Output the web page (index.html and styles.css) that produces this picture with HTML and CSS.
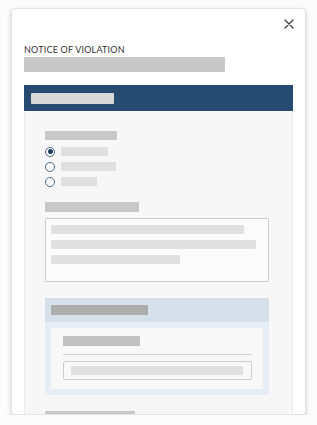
FILE: index.html
```html
<!DOCTYPE html>
<html lang="en">
<head>
  <meta charset="UTF-8">
  <meta name="viewport" content="width=device-width, initial-scale=1.0">
  <title>Notice of Violation</title>
  <link rel="stylesheet" href="styles.css">
</head>
<body>
  <div class="modal">
    <div class="modal-top">
      <button class="close-button" aria-label="Close">
        <svg width="10" height="10" viewBox="0 0 10 10">
          <path d="M1 1 L9 9 M9 1 L1 9" stroke="#444" stroke-width="1.4" stroke-linecap="round" fill="none"/>
        </svg>
      </button>
    </div>

    <div class="modal-header">
      <div class="modal-title">NOTICE OF VIOLATION</div>
      <div class="ph ph-subtitle"></div>
    </div>

    <!-- 表单区域 -->
    <div class="section-bar">
      <div class="ph ph-section"></div>
    </div>

    <div class="form-panel">
      <div class="ph ph-label" style="width: 72px"></div>
      <div class="radio-group">
        <div class="radio-row">
          <span class="radio checked"></span>
          <span class="ph ph-option" style="width: 47px"></span>
        </div>
        <div class="radio-row">
          <span class="radio"></span>
          <span class="ph ph-option" style="width: 55px"></span>
        </div>
        <div class="radio-row">
          <span class="radio"></span>
          <span class="ph ph-option" style="width: 36px"></span>
        </div>
      </div>

      <div class="ph ph-label label-gap" style="width: 94px"></div>
      <div class="textarea">
        <div class="ph ph-line" style="width: 193px"></div>
        <div class="ph ph-line" style="width: 205px"></div>
        <div class="ph ph-line" style="width: 129px"></div>
      </div>

      <div class="group">
        <div class="group-header">
          <div class="ph ph-group-title"></div>
        </div>
        <div class="group-body">
          <div class="group-card">
            <div class="ph ph-card-label"></div>
            <div class="divider"></div>
            <div class="input">
              <div class="ph ph-option" style="width: 172px"></div>
            </div>
          </div>
        </div>
      </div>

      <div class="ph ph-label bottom-label" style="width: 90px"></div>
    </div>
  </div>
</body>
</html>
```

FILE: styles.css
```css
/* 全局样式 */
* {
  box-sizing: border-box;
  margin: 0;
  padding: 0;
}

body {
  background-color: #fbfbfb;
  font-family: Lato, 'Liberation Sans', sans-serif;
  color: #333;
}

/* 弹窗 */
.modal {
  width: 295px;
  height: 407px;
  margin: 8px 0 0 11px;
  background-color: #fff;
  border: 1px solid #e4e4e4;
  border-radius: 4px;
  box-shadow: 0 2px 4px rgba(0, 0, 0, 0.18);
  overflow: hidden;
  padding: 0 12px;
}

.modal-top {
  display: flex;
  justify-content: flex-end;
  padding-top: 10px;
  height: 35px;
}

.close-button {
  width: 10px;
  height: 10px;
  border: none;
  background: none;
  cursor: pointer;
  display: flex;
  margin-right: -1px;
}

.modal-title {
  font-size: 9px;
  line-height: 11px;
  letter-spacing: 0.2px;
  color: #333;
}

/* 占位条 */
.ph {
  border-radius: 1px;
  background-color: #e0e0e0;
}

.ph-subtitle {
  width: 201px;
  height: 15px;
  margin-top: 2px;
  background-color: #c8c8c8;
}

.section-bar {
  margin-top: 13px;
  height: 26px;
  padding: 8px 7px;
  background-color: #264a70;
}

.ph-section {
  width: 83px;
  height: 11px;
  background-color: #d8d8d8;
}

.form-panel {
  background-color: #f7f7f7;
  border-left: 1px solid #ececec;
  border-right: 1px solid #ececec;
  padding: 20px 23px 0 20px;
  height: 320px;
}

.ph-label {
  height: 9px;
  background-color: #c8c8c8;
}

.radio-group {
  margin-top: 4px;
}

.radio-row {
  display: flex;
  align-items: center;
  height: 15px;
  gap: 6px;
}

.radio {
  width: 10px;
  height: 10px;
  border: 1px solid #4c6683;
  border-radius: 50%;
  background-color: #fff;
  display: flex;
  align-items: center;
  justify-content: center;
}

.radio.checked::after {
  content: '';
  width: 5px;
  height: 5px;
  border-radius: 50%;
  background-color: #1f3d61;
}

.ph-option {
  height: 9px;
}

.label-gap {
  margin-top: 13px;
  height: 10px;
}

.textarea {
  margin-top: 6px;
  height: 64px;
  background-color: #fbfbfb;
  border: 1px solid #cdcdcd;
  border-radius: 1px;
  padding: 6px 5px;
  display: flex;
  flex-direction: column;
  gap: 6px;
}

.ph-line {
  height: 9px;
}

/* 分组区域 */
.group {
  margin-top: 16px;
}

.group-header {
  height: 24px;
  padding: 7px 6px;
  background-color: #d6e0ea;
}

.ph-group-title {
  width: 97px;
  height: 10px;
  background-color: #adadad;
}

.group-body {
  background-color: #e7edf4;
  padding: 6px;
}

.group-card {
  background-color: #f8f8f8;
  padding: 8px 11px 9px 12px;
}

.ph-card-label {
  width: 77px;
  height: 10px;
  background-color: #c2c2c2;
}

.divider {
  margin-top: 8px;
  height: 1px;
  background-color: #cfcfcf;
}

.input {
  margin-top: 6px;
  height: 19px;
  border: 1px solid #cdcdcd;
  border-radius: 2px;
  padding: 4px 7px;
}

.bottom-label {
  margin-top: 16px;
  height: 10px;
}
```
